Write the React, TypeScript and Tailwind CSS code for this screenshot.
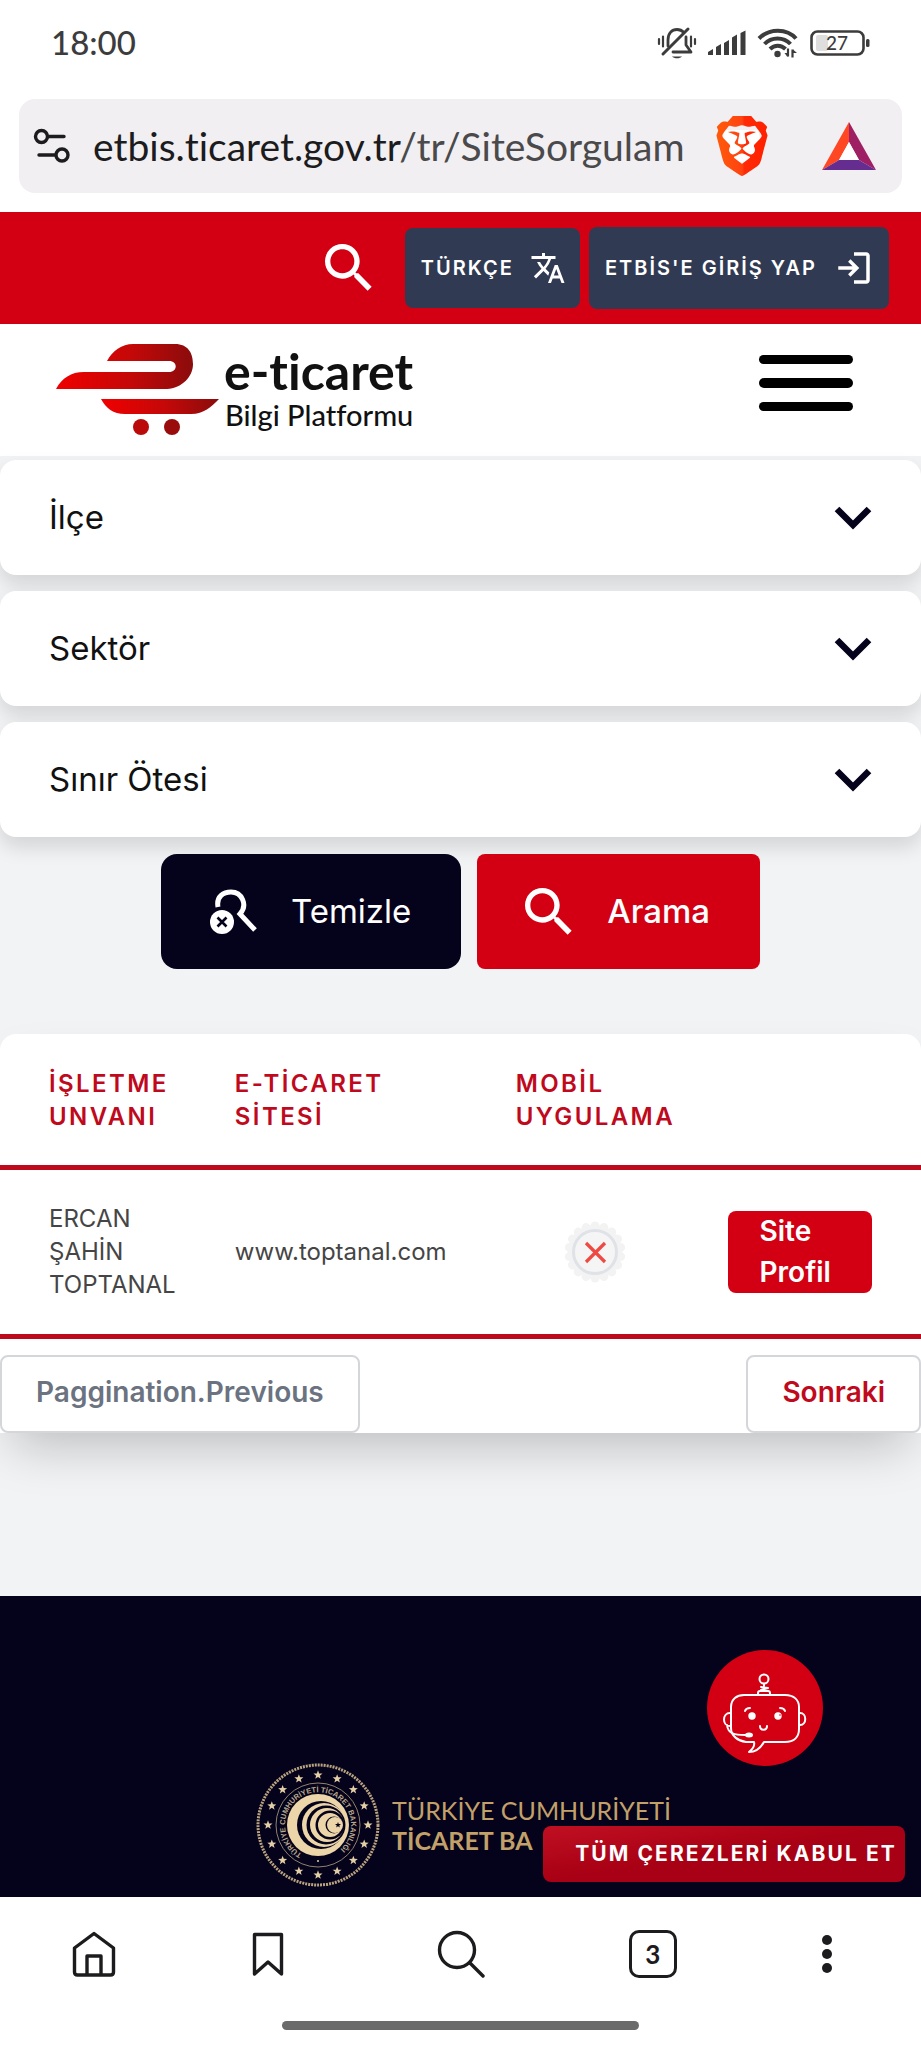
import React, { useState } from 'react';
import { MdSearch, MdTranslate } from 'react-icons/md';
import { SiBrave } from 'react-icons/si';

const STAR = 'M0 -5.2L1.3 -1.7L5 -1.6L2.1 .7L3.1 4.2L0 2.1L-3.1 4.2L-2.1 .7L-5 -1.6L-1.3 -1.7Z';

const BellOffIcon = () => (
  <svg width="40" height="34" viewBox="0 0 40 34" fill="none" stroke="#3c3c3c" strokeWidth="2.8" strokeLinecap="round">
    <path d="M11 20V14C11 7 15 3.5 20 3.5c3 0 5 1 7 3" />
    <path d="M29 11v8l5 7H16" strokeLinejoin="round" />
    <path d="M6 28L31 3" strokeWidth="3" />
    <path d="M15 30.500c2 2.400 8 2.400 10 0z" fill="#3c3c3c" stroke="none" />
    <path d="M2 13v5M6 10.500v10M38 13v5M34 10.500v10" strokeWidth="2.200" />
  </svg>
);

const SignalIcon = () => (
  <svg width="38" height="26" viewBox="0 0 38 26" fill="#3c3c3c">
    <path d="M0 22l5-3v6H0zM8 17l5-3v11H8zM16 13l5-3v15h-5zM24 7.500l5-3V25h-5zM32.500 3l5-2.500V25h-5z" />
  </svg>
);

const WifiIcon = () => (
  <svg width="42" height="32" viewBox="0 0 42 32" fill="none" stroke="#3c3c3c" strokeWidth="4">
    <path d="M2 11.500C12 1 30 1 39 11.500M7.500 17c7-7.500 19-7.500 26 0M13 22c4.500-4.500 11-4.500 15.500 0" />
    <circle cx="20.500" cy="27" r="3.200" fill="#3c3c3c" stroke="none" />
    <path d="M31 21.500v8M35.500 22.500v8" strokeWidth="2.200" />
    <path d="M27.500 26h3v4zM36 22.500v3.500h4z" fill="#3c3c3c" stroke="none" />
  </svg>
);

const BatteryIcon = () => (
  <svg width="60" height="28" viewBox="0 0 60 28">
    <rect x="1.500" y="2.500" width="52" height="23" rx="6" fill="none" stroke="#3c3c3c" strokeWidth="2.600" />
    <rect x="6" y="6" width="12" height="16" rx="2" fill="#dedede" />
    <rect x="56" y="10" width="3.500" height="8" rx="1.500" fill="#3c3c3c" />
    <text x="27" y="21" textAnchor="middle" fontFamily="Lato, sans-serif" fontSize="19" fill="#3c3c3c">27</text>
  </svg>
);

const StatusBar = () => (
  <div className="flex h-[99px] items-start justify-between pt-[22px] pl-[51px] pr-[51px] font-[Lato,sans-serif] text-[33px] leading-[40px] font-medium text-[#3c3c3c]">
    <span>18:00</span>
    <div className="flex items-center gap-[11px] pt-1">
      <BellOffIcon />
      <SignalIcon />
      <WifiIcon />
      <BatteryIcon />
    </div>
  </div>
);

const AddressBar = () => (
  <div className="mx-[19px] mb-[19px] flex h-[94px] items-center rounded-2xl bg-[#f1eff1] pl-[14px] pr-[26px]">
    <button aria-label="Site settings">
      <svg width="38" height="38" viewBox="0 0 38 38" fill="none" stroke="#1c1b1d" strokeWidth="3.400" strokeLinecap="round">
        <circle cx="8.500" cy="9.500" r="6" />
        <path d="M15 9.500h16M6 28h16" />
        <circle cx="29" cy="28" r="6" />
      </svg>
    </button>
    <span className="ml-[22px] flex-1 overflow-hidden whitespace-nowrap font-[Lato,sans-serif] text-[39px] text-[#1c1b1d] [font-variant-ligatures:none]">
      etbis.ticaret.gov.tr<span className="text-[#4a494b]">/tr/SiteSorgulam</span>
    </span>
    <button aria-label="Brave Shields" className="mr-[54px] grid">
      <svg className="col-start-1 row-start-1" width="52" height="60" viewBox="0 0 52 60" fill="#fff">
        <path d="M8 14L42 14L45 26L38 42L26 48L14 42L7 26Z" />
        <defs>
          <linearGradient id="brave" x1="0" x2="1">
            <stop offset="0" stopColor="#ff5a0a" />
            <stop offset="0.5" stopColor="#ff4310" />
            <stop offset="0.55" stopColor="#ff2a05" />
            <stop offset="1" stopColor="#ff2000" />
          </linearGradient>
        </defs>
      </svg>
      <SiBrave className="col-start-1 row-start-1 h-[60px] w-[52px]" fill="url(#brave)" preserveAspectRatio="xMidYMid slice" />
    </button>
    <button aria-label="Brave Rewards">
      <svg width="54" height="48" viewBox="0 0 54 48">
        <path d="M27 0L0 48L17 38L27 20Z" fill="#ff4724" />
        <path d="M27 0L54 48L37 38L27 20Z" fill="#9e1f63" />
        <path d="M0 48H54L37 38H17Z" fill="#662d91" />
        <path d="M27 20L37 38H17Z" fill="#fff" />
      </svg>
    </button>
  </div>
);

const TopBar = () => (
  <div className="flex h-28 items-center justify-end bg-[#d30013] pr-8 text-[20px] font-semibold tracking-widest text-white">
    <button aria-label="Ara" className="mr-6">
      <MdSearch className="size-16" />
    </button>
    <button className="mr-[9px] flex h-20 items-center gap-4 rounded-lg bg-[#303b53] pl-4 pr-[14px]">
      TÜRKÇE
      <MdTranslate className="size-9" />
    </button>
    <button className="flex h-[82px] items-center gap-4 rounded-lg bg-[#303b53] pl-4 pr-[14px]">
      ETBİS'E GİRİŞ YAP
      <svg width="42" height="42" viewBox="0 0 24 24" fill="currentColor">
        <path d="M12 21v-2h7V5h-7V3h7q.825 0 1.413.587Q21 4.175 21 5v14q0 .825-.587 1.413Q19.825 21 19 21Zm-2-4-1.375-1.450 2.550-2.550H3v-2h8.175l-2.550-2.550L10 7l5 5Z" />
      </svg>
    </button>
  </div>
);

const Logo = () => (
  <svg width="370" height="104" viewBox="0 0 370 104" className="[font-variant-ligatures:none]">
    <defs>
      <linearGradient id="cart" x1="0" x2="1">
        <stop offset="0" stopColor="#f00000" />
        <stop offset="0.550" stopColor="#c40808" />
        <stop offset="1" stopColor="#8a0c0c" />
      </linearGradient>
    </defs>
    <path
      d="M51 23C56 13 66 6 77 6H119C132 6 137 15 137 26C137 39 126 50 111 51H0C6 40 15 34 28 34H113C122 34 122 23 113 23Z"
      fill="url(#cart)"
    />
    <path d="M45 61H163C155 69 148 76 135 76H69C57 76 50 70 45 61Z" fill="url(#cart)" />
    <circle cx="85" cy="89" r="8" fill="#bb0a0a" />
    <circle cx="116" cy="89" r="8" fill="#9a0c0c" />
    <text x="168" y="52" fontFamily="Lato, sans-serif" fontSize="50" fontWeight="700" fill="#111">e-ticaret</text>
    <text x="169" y="88" fontFamily="Lato, sans-serif" fontSize="29" fontWeight="500" fill="#111">Bilgi Platformu</text>
  </svg>
);

const Header = () => (
  <header className="flex h-[132px] items-center justify-between bg-white pl-14 pr-[68px]">
    <a href="#" aria-label="e-ticaret Bilgi Platformu">
      <Logo />
    </a>
    <button aria-label="Menü" className="mb-[14px] flex w-[94px] flex-col gap-[14px]">
      <span className="h-[9px] w-full rounded-full bg-black" />
      <span className="h-[10px] w-full rounded-full bg-black" />
      <span className="h-[9px] w-full rounded-full bg-black" />
    </button>
  </header>
);

const Filter: React.FC<{ label: string }> = ({ label }) => (
  <div className="grid items-center rounded-2xl bg-white shadow-[0_10px_20px_rgba(0,0,0,0.13)]">
    <select
      aria-label={label}
      className="col-start-1 row-start-1 h-[115px] w-full appearance-none rounded-2xl bg-transparent px-[49px] text-[33px] text-[#111]"
    >
      <option>{label}</option>
    </select>
    <svg
      className="pointer-events-none col-start-1 row-start-1 mr-[49px] justify-self-end"
      width="38"
      height="24"
      viewBox="0 0 38 24"
      fill="none"
      stroke="#05021c"
      strokeWidth="6.500"
    >
      <path d="M3 3L19 19L35 3" />
    </svg>
  </div>
);

const ClearIcon = () => (
  <svg width="64" height="64" viewBox="0 0 64 64" fill="none" stroke="#fff" strokeWidth="5">
    <path d="M17 27C15 16 23 12 30 12C41 12 47 25 39 34L54 50" />
    <circle cx="21" cy="42" r="12" fill="#fff" stroke="none" />
    <path d="M16.500 37.500l9 9M25.500 37.500l-9 9" stroke="#05021c" strokeWidth="2.600" />
  </svg>
);

const NoAppBadge = () => (
  <svg width="64" height="64" viewBox="0 0 64 64" role="img" aria-label="Yok">
    {Array.from({ length: 18 }, (_, i) => (
      <circle key={i} cx="32" cy="6" r="4.500" fill="#f3f3f4" transform={`rotate(${i * 20} 32 32)`} />
    ))}
    <circle cx="32" cy="32" r="27" fill="#f3f3f4" />
    <circle cx="32" cy="32" r="21.500" fill="#f5f5f5" stroke="#dfe2e6" strokeWidth="3" />
    <path d="M23 23L42 42M42 23L23 42" stroke="#ee4a43" strokeWidth="3.200" />
  </svg>
);

const rows = [{ unvan: 'ERCAN ŞAHİN TOPTANAL', site: 'www.toptanal.com' }];

const ResultTable = () => (
  <div className="mt-[65px] rounded-t-2xl bg-white shadow-[0_25px_50px_-12px_rgba(0,0,0,0.22)]">
    <table className="w-full table-fixed border-separate border-spacing-0 text-left text-[24px] leading-[33px]">
      <colgroup>
        <col className="w-[25.500%]" />
        <col className="w-[30.500%]" />
        <col className="w-[23%]" />
        <col />
      </colgroup>
      <thead>
        <tr className="align-top font-semibold tracking-widest text-[#bf0a1d] [&>*]:border-b-[5px] [&>*]:border-[#bf0a1d] [&>*]:pt-[33px] [&>*]:pb-8 [&>*]:font-semibold">
          <th className="pl-[49px]">İŞLETME<br />UNVANI</th>
          <th>E-TİCARET<br />SİTESİ</th>
          <th>MOBİL<br />UYGULAMA</th>
          <td />
        </tr>
      </thead>
      <tbody>
        {rows.map(row => (
          <tr key={row.site} className="text-[#454545] [&>*]:border-b-[5px] [&>*]:border-[#bf0a1d] [&>*]:pt-8 [&>*]:pb-[33px]">
            <td className="pl-[49px] pr-12">{row.unvan}</td>
            <td>{row.site}</td>
            <td className="pr-[54px]">
              <div className="flex justify-center">
                <NoAppBadge />
              </div>
            </td>
            <td className="pr-[49px]">
              <button className="block w-full rounded-lg bg-[#d30013] px-8 text-left text-[28px] leading-[41px] font-semibold text-white">
                Site Profil
              </button>
            </td>
          </tr>
        ))}
      </tbody>
    </table>
    <nav className="mt-4 flex justify-between text-[28px] leading-[33px] font-semibold">
      <button disabled className="h-[78px] rounded-lg border-2 border-[#d4d6da] px-[34px] pb-1 text-[#6b7280]">Paggination.Previous</button>
      <button className="h-[78px] rounded-lg border-2 border-[#d4d6da] px-[34px] pb-1 text-[#bf0a1d]">Sonraki</button>
    </nav>
  </div>
);

const Emblem = () => (
  <svg width="126" height="126" viewBox="-63 -63 126 126">
    <circle r="60" fill="none" stroke="#b9a47f" strokeWidth="3" strokeDasharray="2 1" />
    {Array.from({ length: 16 }, (_, i) => {
      const a = (i * Math.PI) / 8;
      return <path key={i} d={STAR} fill="#e3cfa6" transform={`translate(${50 * Math.sin(a)} ${-50 * Math.cos(a)}) scale(.9)`} />;
    })}
    <circle r="42" fill="none" stroke="#8f826c" />
    <path id="ring" d="M-16 29A33 33 0 1 1 16 29" fill="none" />
    <text fontFamily="'Liberation Sans', sans-serif" fontSize="7.500" fontWeight="700" fill="#b9a88a">
      <textPath href="#ring">TÜRKİYE CUMHURİYETİ TİCARET BAKANLIĞI</textPath>
    </text>
    <circle cy="36" r="1" fill="#e3cfa6" />
    <circle r="31" fill="#ecd5a8" />
    <circle cx="3" r="24" fill="#05021c" />
    <circle cx="6" r="22" fill="#ecd5a8" />
    <circle cx="8" r="19.500" fill="#05021c" />
    <circle cx="9" r="17" fill="#ecd5a8" />
    <circle cx="12" r="14.500" fill="#05021c" />
    <circle cx="12" r="12" fill="#ecd5a8" />
    <circle cx="16" r="8.500" fill="#05021c" />
    <circle cx="17" r="8" fill="#ecd5a8" />
    <path d={STAR} fill="#05021c" transform="translate(20 0) scale(.6)" />
  </svg>
);

const RobotIcon = () => (
  <svg width="116" height="116" viewBox="0 0 116 116" fill="none" stroke="#fff" strokeWidth="2" strokeLinecap="round" strokeLinejoin="round">
    <circle cx="57" cy="29" r="4.500" />
    <path d="M57 34v2M54 37l7 1-7 2 7 1" />
    <path d="M51 45v-2q0-2 2-2h8q2 0 2 2v2" />
    <path d="M78 92H57C53 99 47 102 42 102C46 99 48 96 47 92H39C31 91 24 86 24 78V57C24 49 30 45 37 45H78C87 45 92 50 92 57V79C92 87 87 92 78 92" />
    <path d="M23 63c-8 0-8 13 0 13M93 63c7 0 7 12 0 12M20 75c1 9 8 10 18 10" />
    <ellipse cx="42" cy="85" rx="3" ry="1.500" fill="#fff" />
    <circle cx="45" cy="66" r="2.700" fill="#fff" />
    <circle cx="71" cy="66" r="2.700" fill="#fff" />
    <path d="M38 61q1-3 5-3M73 58q4 0 5 3M53 76c0 5 7 5 7 0" />
    <circle cx="73" cy="65" r=".8" fill="#d30013" stroke="none" />
  </svg>
);

const Footer = () => (
  <footer className="relative h-[301px] bg-[#05021c] pt-[166px] pl-[255px]">
    <div className="flex items-center gap-[11px]">
      <Emblem />
      <p className="whitespace-nowrap font-[Lato,sans-serif] text-[25px] leading-[30px] text-[#c2a069]">
        TÜRKİYE CUMHURİYETİ
        <br />
        <b>TİCARET BA</b>
      </p>
    </div>
    <button aria-label="Sohbet" className="absolute top-[54px] right-[98px] rounded-full bg-[#d30013]">
      <RobotIcon />
    </button>
    <button className="absolute right-4 bottom-[15px] h-14 rounded-lg bg-linear-to-br from-[#c01022] to-[#a80014] to-50% pl-8 pr-2 text-[21px] font-bold tracking-widest whitespace-nowrap text-white">
      TÜM ÇEREZLERİ KABUL ET
    </button>
  </footer>
);

const BottomNav: React.FC<{ tabs: number }> = ({ tabs }) => (
  <nav className="flex h-[151px] flex-col items-center justify-between bg-white pt-8 pb-[18px] text-[#1c1c1e]">
    <div className="flex w-full justify-between px-[70px]">
      <button aria-label="Home">
        <svg width="48" height="50" viewBox="0 0 48 50" fill="none" stroke="currentColor" strokeWidth="3.400" strokeLinejoin="round">
          <path d="M4.500 19L24 4.500L43.500 19V43q0 3-3 3h-33q-3 0-3-3ZM17 46V27H31V46" />
        </svg>
      </button>
      <button aria-label="Bookmarks">
        <svg width="48" height="50" viewBox="0 0 48 50" fill="none" stroke="currentColor" strokeWidth="3.400" strokeLinejoin="round">
          <path d="M10.500 5.500H37.500V45L24 33L10.500 45Z" />
        </svg>
      </button>
      <button aria-label="Search" className="flex w-[84px] justify-center">
        <svg width="48" height="50" viewBox="0 0 48 50" fill="none" stroke="currentColor" strokeWidth="3.400" strokeLinecap="round">
          <circle cx="20" cy="21" r="17.500" />
          <path d="M33 34L46 47" />
        </svg>
      </button>
      <button aria-label="Tabs" className="mt-px flex size-12 items-center justify-center rounded-[10px] border-[3px] border-current font-[Lato,sans-serif] text-[26px] font-bold">
        {tabs}
      </button>
      <button aria-label="More">
        <svg width="48" height="50" viewBox="0 0 48 50" fill="currentColor">
          <circle cx="24" cy="11" r="5" />
          <circle cx="24" cy="25" r="5" />
          <circle cx="24" cy="39" r="5" />
        </svg>
      </button>
    </div>
    <span className="h-[9px] w-[357px] rounded-full bg-[#6b6b6b]" />
  </nav>
);

export default function App() {
  const [tabs] = useState(3);

  return (
    <div className="flex min-h-screen flex-col bg-white font-[Inter,sans-serif]">
      <StatusBar />
      <AddressBar />
      <TopBar />
      <Header />
      <main className="flex-1 bg-[#f2f3f5] pt-1 pb-[163px]">
        <div className="flex flex-col gap-4">
          <Filter label="İlçe" />
          <Filter label="Sektör" />
          <Filter label="Sınır Ötesi" />
        </div>
        <div className="mt-[17px] flex justify-center gap-4 text-[33px] text-white">
          <button className="flex h-[115px] items-center gap-[26px] rounded-2xl bg-[#05021c] pl-10 pr-[50px]">
            <ClearIcon />
            Temizle
          </button>
          <button className="flex h-[115px] items-center gap-[26px] rounded-lg bg-[#d30013] pl-10 pr-[50px] font-medium">
            <MdSearch className="size-16" />
            Arama
          </button>
        </div>
        <ResultTable />
      </main>
      <Footer />
      <BottomNav tabs={tabs} />
    </div>
  );
}
